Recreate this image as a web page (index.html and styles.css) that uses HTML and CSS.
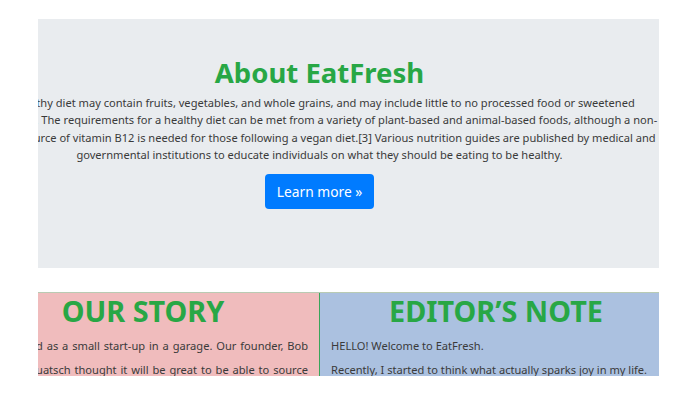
FILE: index.html
```html
<!DOCTYPE html>
<html lang="en">
<head>
    <meta charset="UTF-8">
    <meta name="viewport" content="width=device-width, initial-scale=1.0">
    <title>EatFresh</title>
    <link rel="stylesheet" href="styles.css">
</head>
<body>
    <div class="jumbotron">
        <div class="jumbo-inner">
            <h1 class="title">About EatFresh</h1>
            <p class="lead">A healthy diet may contain fruits, vegetables, and whole grains, and may include little to no processed food or sweetened beverages. The requirements for a healthy diet can be met from a variety of plant-based and animal-based foods, although a non-animal source of vitamin B12 is needed for those following a vegan diet.[3] Various nutrition guides are published by medical and governmental institutions to educate individuals on what they should be eating to be healthy.</p>
            <a href="#" class="btn">Learn more &raquo;</a>
        </div>
    </div>

    <div class="row">
        <div class="col story">
            <div class="col-inner">
                <h2 class="col-title">OUR STORY</h2>
                <p class="col-text story-text">
                    <span>EatFresh started as a small start-up in a garage. Our founder, Bob</span>
                    <span>Squatsch thought it will be great to be able to source</span>
                    <span>fresh produce straight from local farms to your table.</span>
                </p>
            </div>
        </div>
        <div class="col note">
            <div class="col-inner">
                <h2 class="col-title">EDITOR&rsquo;S NOTE</h2>
                <p class="col-text">HELLO! Welcome to EatFresh.</p>
                <p class="col-text">Recently, I started to think what actually sparks joy in my life.</p>
            </div>
        </div>
    </div>
</body>
</html>
```

FILE: styles.css
```css
body {
    margin: 0;
    padding: 19px 33px 0 38px;
    font-family: "Noto Sans", sans-serif;
    color: #3a3a3a;
    background: #fff;
}
.jumbotron {
    background: #e9ecef;
    height: 249px;
    overflow: hidden;
    display: flex;
    justify-content: center;
}
.jumbo-inner {
    flex: 0 0 690px;
    margin-left: -58px;
    padding-top: 37px;
    text-align: center;
}
.title {
    margin: 0 0 5px;
    font-size: 27.5px;
    font-weight: bold;
    line-height: 1.2;
    color: #28a745;
}
.lead {
    margin: 0 0 10px;
    font-size: 11.1px;
    line-height: 17.4px;
}
.btn {
    display: inline-block;
    padding: 7px 12px;
    background: #007bff;
    color: #fff;
    font-size: 13.8px;
    line-height: 21px;
    text-decoration: none;
    border-radius: 4px;
}
.row {
    display: flex;
    margin-top: 24px;
    height: 83px;
    border-top: 1px solid #b9cbb3;
    overflow: hidden;
}
.col {
    overflow: hidden;
    display: flex;
}
.story {
    width: 281px;
    background: #f0bcbd;
    border-right: 1px solid #3aa55a;
    justify-content: flex-end;
}
.note {
    flex: 1;
    background: #abc1e0;
    padding-left: 11px;
}
.col-inner {
    flex: 0 0 330px;
    min-width: 0;
    padding-right: 11px;
}
.col-title {
    margin: 2px 0 7px;
    font-size: 28.8px;
    font-weight: bold;
    line-height: 1.1;
    color: #28a745;
    text-align: center;
}
.col-text {
    margin: 0;
    font-size: 11.1px;
    line-height: 24px;
}
.story-text {
    display: flex;
    flex-direction: column;
    align-items: flex-end;
    white-space: nowrap;
    word-spacing: 1px;
}
```
